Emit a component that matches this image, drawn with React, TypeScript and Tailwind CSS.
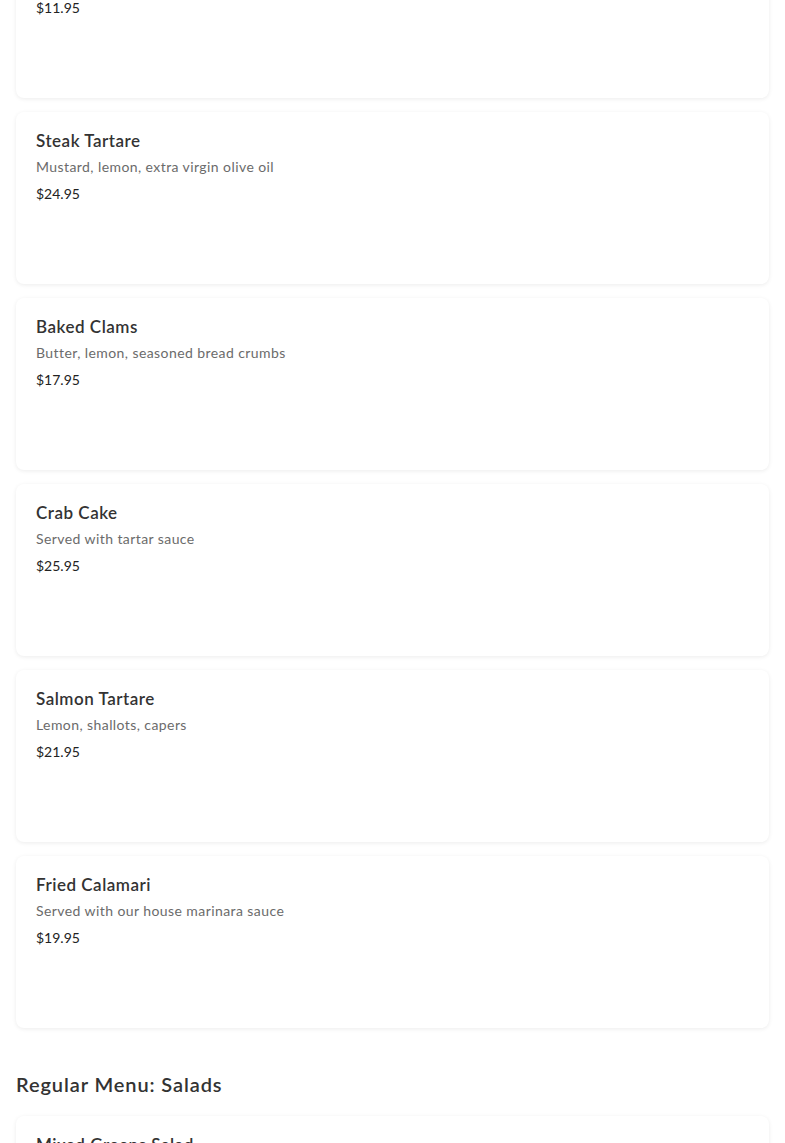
import React from "react";

interface MenuItem {
  name: string;
  description: string;
  price: string;
}

const appetizers: MenuItem[] = [
  { name: "Shrimp Cocktail", description: "Cocktail sauce, lemon", price: "$11.95" },
  { name: "Steak Tartare", description: "Mustard, lemon, extra virgin olive oil", price: "$24.95" },
  { name: "Baked Clams", description: "Butter, lemon, seasoned bread crumbs", price: "$17.95" },
  { name: "Crab Cake", description: "Served with tartar sauce", price: "$25.95" },
  { name: "Salmon Tartare", description: "Lemon, shallots, capers", price: "$21.95" },
  { name: "Fried Calamari", description: "Served with our house marinara sauce", price: "$19.95" },
];

const salads: MenuItem[] = [
  { name: "Mixed Greens Salad", description: "House vinaigrette", price: "$12.95" },
];

const MenuCard: React.FC<{ item: MenuItem }> = ({ item }) => (
  <div className="bg-white rounded-lg shadow-[0_1px_4px_rgba(0,0,0,0.08)] px-5 pt-[19px] h-[172px] shrink-0">
    <h3 className="text-[17px] leading-[20px] font-semibold text-[#333] tracking-[0.03em]">
      {item.name}
    </h3>
    <p className="mt-[6px] text-[14px] leading-[20px] text-[#6b6b6b] tracking-[0.03em]">
      {item.description}
    </p>
    <p className="mt-[7px] text-[14px] leading-[20px] text-[#222]">{item.price}</p>
  </div>
);

export default function App() {
  return (
    <div
      className="min-h-screen bg-white px-4 overflow-hidden"
      style={{ fontFamily: "Lato, 'Noto Sans', sans-serif" }}
    >
      <div className="flex flex-col gap-[14px] -mt-[74px]">
        {appetizers.map((item) => (
          <MenuCard key={item.name} item={item} />
        ))}
      </div>
      <h2 className="mt-[42px] text-[20px] leading-[28px] font-semibold text-[#333] tracking-[0.045em]">
        Regular Menu: Salads
      </h2>
      <div className="flex flex-col gap-[14px] mt-[18px]">
        {salads.map((item) => (
          <MenuCard key={item.name} item={item} />
        ))}
      </div>
    </div>
  );
}
